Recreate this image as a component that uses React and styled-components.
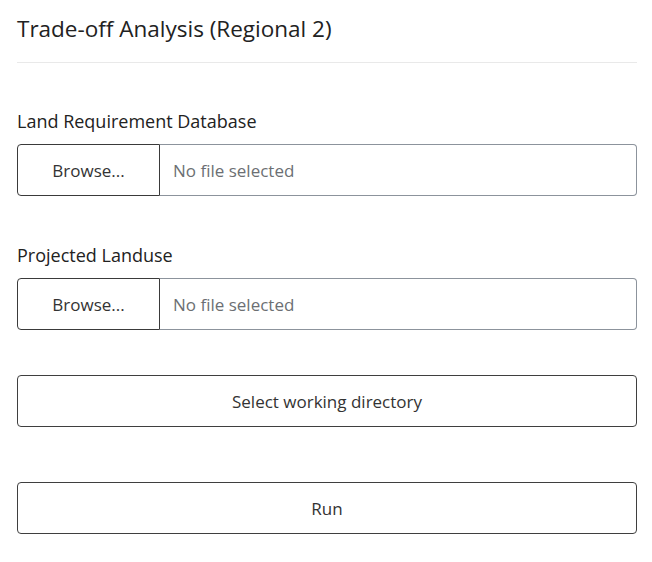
import React from "react";
import styled, { createGlobalStyle } from "styled-components";

const Global = createGlobalStyle`
  html, body { margin: 0; padding: 0; background: #fff; }
  body { font-family: "Open Sans", "Noto Sans", sans-serif; color: #212529; }
  * { box-sizing: border-box; }
`;

const Page = styled.div`
  padding: 0 15px 0 17px;
  width: 652px;
`;

const Title = styled.h2`
  margin: 0;
  padding-top: 14px;
  padding-bottom: 18px;
  font-size: 22.5px;
  font-weight: 400;
  line-height: 30px;
  color: #222;
  border-bottom: 1px solid #e9e9e9;
`;

const Field = styled.div`
  margin-top: ${(p) => p.$mt}px;
`;

const Label = styled.div`
  font-size: 18px;
  line-height: 24px;
  color: #222;
  margin-bottom: 11px;
`;

const FileGroup = styled.div`
  display: flex;
  height: 52px;
`;

const Browse = styled.div`
  width: 143px;
  flex: none;
  display: flex;
  align-items: center;
  justify-content: center;
  border: 1px solid #3a3a3a;
  border-radius: 4px 0 0 4px;
  font-size: 17px;
  color: #333;
`;

const FileName = styled.div`
  flex: 1;
  display: flex;
  align-items: center;
  padding-left: 13px;
  border: 1px solid #8c939c;
  border-left: none;
  border-radius: 0 4px 4px 0;
  font-size: 17px;
  color: #6c6f73;
`;

const Button = styled.div`
  margin-top: ${(p) => p.$mt}px;
  height: 52px;
  display: flex;
  align-items: center;
  justify-content: center;
  border: 1px solid #3f3f3f;
  border-radius: 4px;
  font-size: 17px;
  color: #333;
`;

export default function App() {
  return (
    <>
      <Global />
      <Page>
        <Title>Trade-off Analysis (Regional 2)</Title>
        <Field $mt={46}>
          <Label>Land Requirement Database</Label>
          <FileGroup>
            <Browse>Browse...</Browse>
            <FileName>No file selected</FileName>
          </FileGroup>
        </Field>
        <Field $mt={47}>
          <Label>Projected Landuse</Label>
          <FileGroup>
            <Browse>Browse...</Browse>
            <FileName>No file selected</FileName>
          </FileGroup>
        </Field>
        <Button $mt={45}>Select working directory</Button>
        <Button $mt={55}>Run</Button>
      </Page>
    </>
  );
}
